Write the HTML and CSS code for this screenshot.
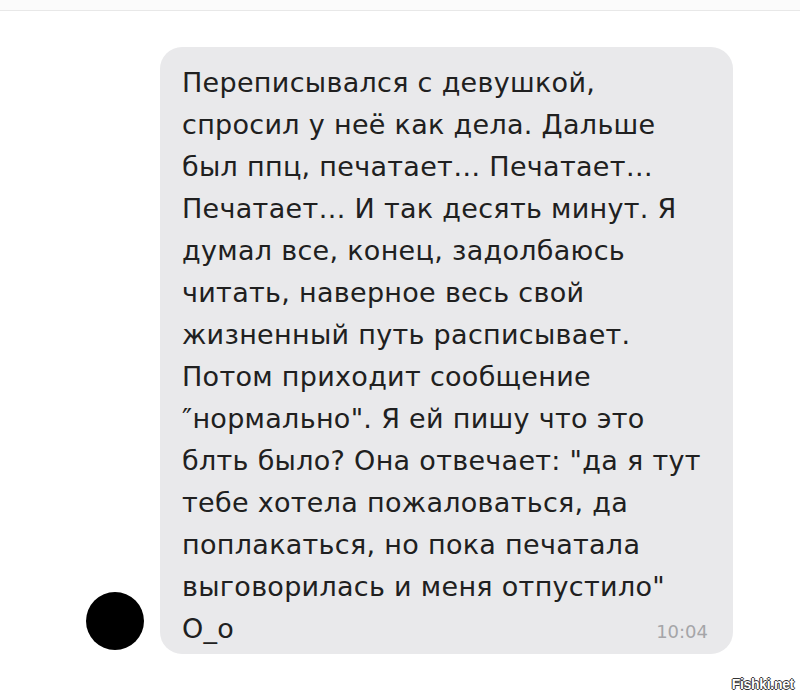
FILE: index.html
```html
<!DOCTYPE html>
<html lang="ru">
<head>
<meta charset="utf-8">
<title>Сообщение</title>
<link rel="stylesheet" href="styles.css">
</head>
<body>
<div class="page">
  <div class="topbar"></div>
  <div class="row">
    <div class="avatar"></div>
    <div class="bubble">
      <div class="text">Переписывался с девушкой,<br>спросил у неё как дела. Дальше<br>был ппц, печатает… Печатает…<br>Печатает… И так десять минут. Я<br>думал все, конец, задолбаюсь<br>читать, наверное весь свой<br>жизненный путь расписывает.<br>Потом приходит сообщение<br>″нормально". Я ей пишу что это<br>блть было? Она отвечает: "да я тут<br>тебе хотела пожаловаться, да<br>поплакаться, но пока печатала<br>выговорилась и меня отпустило"</div>
      <div class="last">
        <span class="text">О_о</span>
        <span class="time">10:04</span>
      </div>
    </div>
  </div>
  <div class="watermark">Fishki.net</div>
</div>
</body>
</html>
```
FILE: styles.css
```css
html, body {
  margin: 0;
  padding: 0;
  background: #ffffff;
}
.page {
  position: relative;
  width: 800px;
  height: 700px;
  overflow: hidden;
  font-family: "DejaVu Sans", "Liberation Sans", sans-serif;
}
.topbar {
  height: 10px;
  border-bottom: 1px solid #e8e8e8;
  background: #fbfbfb;
}
.row {
  display: flex;
  align-items: flex-end;
  gap: 16px;
  padding: 36px 0 0 86px;
}
.avatar {
  width: 58px;
  height: 58px;
  border-radius: 50%;
  background: #000;
  margin-bottom: 4px;
  flex: none;
}
.bubble {
  width: 573px;
  box-sizing: border-box;
  background: #e9e9eb;
  border-radius: 22px;
  padding: 15px 25px 4px 22px;
}
.text {
  font-size: 27px;
  line-height: 42px;
  color: #202020;
  letter-spacing: 0.3px;
}
.last {
  display: flex;
  justify-content: space-between;
  align-items: baseline;
}
.time {
  font-size: 18px;
  color: #a5a5a8;
}
.watermark {
  position: absolute;
  right: 6px;
  bottom: 8px;
  font-family: "Liberation Sans", sans-serif;
  font-size: 14px;
  font-weight: bold;
  color: #fff;
  text-shadow: -1px 0 #333, 1px 0 #333, 0 -1px #333, 0 1px #333;
  letter-spacing: -0.3px;
}
```
